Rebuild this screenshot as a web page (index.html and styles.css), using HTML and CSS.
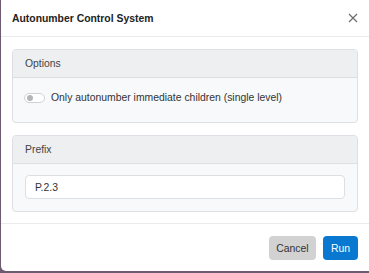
FILE: index.html
```html
<!DOCTYPE html>
<html>
<head>
<meta charset="utf-8">
<link rel="stylesheet" href="styles.css">
</head>
<body>
<div class="modal">
  <div class="modal-header">
    <div class="modal-title">Autonumber Control System</div>
    <svg class="close" width="10" height="10" viewBox="0 0 10 10"><path d="M1 1 L9 9 M9 1 L1 9" stroke="#6c6c6c" stroke-width="1.2" fill="none"/></svg>
  </div>
  <div class="modal-body">
    <div class="card">
      <div class="card-header">Options</div>
      <div class="card-body card-body-options">
        <label class="switch-row">
          <span class="switch"><span class="knob"></span></span>
          <span class="switch-label">Only autonumber immediate children (single level)</span>
        </label>
      </div>
    </div>
    <div class="card">
      <div class="card-header">Prefix</div>
      <div class="card-body">
        <div class="input">P.2.3</div>
      </div>
    </div>
  </div>
  <div class="modal-footer">
    <button class="btn btn-cancel">Cancel</button>
    <button class="btn btn-run">Run</button>
  </div>
</div>
</body>
</html>
```

FILE: styles.css
```css
html, body {
  margin: 0;
  padding: 0;
}
body {
  background: #6d5a70;
  font-family: "Liberation Sans", Arial, sans-serif;
  width: 369px;
  height: 273px;
  overflow: hidden;
}
.modal {
  margin-left: 1px;
  width: 368px;
  height: 271px;
  background: #fff;
  border-bottom-left-radius: 5px;
  display: flex;
  flex-direction: column;
}
.modal-header {
  height: 36px;
  padding: 0 11px 0 11px;
  display: flex;
  align-items: center;
  justify-content: space-between;
  border-bottom: 1px solid #e9ecef;
}
.modal-title {
  font-weight: bold;
  font-size: 10.4px;
  color: #222;
}
.modal-body {
  padding: 12px 11px 11px 11px;
  display: flex;
  flex-direction: column;
  gap: 12px;
  border-bottom: 1px solid #e9ecef;
}
.card {
  border: 1px solid #dcdfe3;
  border-radius: 4px;
  background: #f8f9fa;
  overflow: hidden;
}
.card-header {
  height: 27px;
  padding: 0 12px;
  display: flex;
  align-items: center;
  background: #eeeff1;
  border-bottom: 1px solid #dcdfe3;
  font-size: 10.4px;
  color: #444;
}
.card-body {
  padding: 11px 12px 12px 12px;
}
.card-body-options {
  padding: 11px 12px 16px 11px;
}
.switch-row {
  display: flex;
  align-items: center;
  gap: 6px;
  height: 17px;
}
.switch {
  box-sizing: content-box;
  width: 15px;
  height: 8px;
  border: 1px solid #cfd3d7;
  border-radius: 6px;
  background: #fff;
  display: flex;
  align-items: center;
  padding: 0 2px;
}
.knob {
  width: 6px;
  height: 6px;
  border-radius: 50%;
  background: #b5b5b5;
}
.switch-label {
  font-size: 10.4px;
  color: #333;
}
.input {
  height: 22px;
  border: 1px solid #dcdfe3;
  border-radius: 4px;
  background: #fff;
  display: flex;
  align-items: center;
  padding: 0 9px;
  font-size: 10.4px;
  color: #333;
}
.modal-footer {
  flex: 1;
  display: flex;
  justify-content: flex-end;
  align-items: flex-start;
  gap: 7px;
  padding: 12px 11px 0 0;
}
.btn {
  height: 24px;
  border: none;
  border-radius: 4px;
  font-family: "Liberation Sans", Arial, sans-serif;
  font-size: 10.4px;
  padding: 0;
  cursor: pointer;
}
.btn-cancel {
  background: #d2d2d2;
  color: #333;
  width: 47px;
}
.btn-run {
  background: #0878d1;
  color: #fff;
  width: 35px;
}
```
